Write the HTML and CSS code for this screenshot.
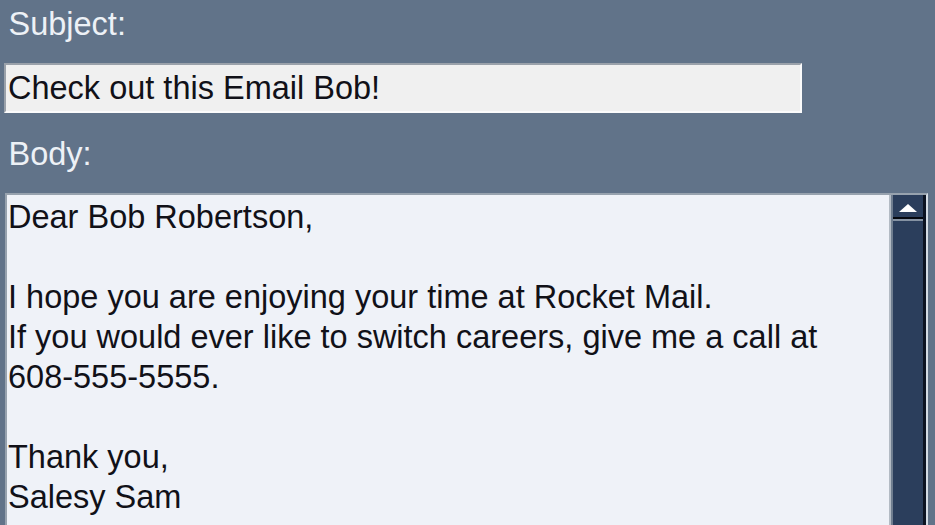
FILE: index.html
```html
<!DOCTYPE html>
<html lang="en">
<head>
<meta charset="utf-8">
<title>Compose</title>
<link rel="stylesheet" href="styles.css">
</head>
<body>
<form class="form">
  <div class="label">Subject:</div>
  <div class="subject">Check out this Email Bob!</div>
  <div class="label label-body">Body:</div>
  <div class="body-box">
    <div class="text">Dear Bob Robertson,

I hope you are enjoying your time at Rocket Mail.
If you would ever like to switch careers, give me a call at
608-555-5555.

Thank you,
Salesy Sam</div>
    <div class="scroll">
      <div class="up"><span class="arrow"></span></div>
      <div class="track"></div>
    </div>
  </div>
</form>
</body>
</html>
```
FILE: styles.css
```css
html, body {
  margin: 0;
  height: 100%;
  overflow: hidden;
  background: #617389;
}

.form {
  display: flex;
  flex-direction: column;
  align-items: flex-start;
  padding: 3.75px 0 0 4px;
  font-family: "Liberation Sans", Arial, sans-serif;
  font-size: 32.5px;
  line-height: 40px;
}

.label {
  color: #edf1f6;
  padding-left: 4.5px;
  height: 40px;
}

.label-body {
  margin-top: 21.25px;
}

.subject {
  margin-top: 18.75px;
  box-sizing: border-box;
  width: 798px;
  height: 50px;
  padding: 3.5px 0 0 2px;
  background: #f0f0f0;
  border: 2.5px solid;
  border-color: #9aa1aa #fbfbfb #fbfbfb #9aa1aa;
  color: #111118;
  white-space: nowrap;
}

.body-box {
  margin-top: 18.75px;
  margin-left: 1px;
  box-sizing: border-box;
  width: 922.5px;
  height: 420px;
  display: flex;
  background: #eff2f8;
  border: 2.5px solid;
  border-color: #97a2ae #d3dbe4 #d3dbe4 #97a2ae;
}

.text {
  flex: 1;
  padding: 2.7px 0 0 1px;
  white-space: pre-line;
  color: #111118;
}

.scroll {
  width: 37px;
  box-sizing: border-box;
  display: flex;
  flex-direction: column;
  border-left: 2px solid #b3bbc4;
  border-right: 3px solid #0c1322;
  padding-left: 2px;
  background: #6f7d8f;
}

.up {
  height: 22px;
  flex: none;
  background: #2b3e5c;
  border-bottom: 2.5px solid #05080f;
  display: flex;
  align-items: center;
  justify-content: center;
}

.arrow {
  width: 0;
  height: 0;
  margin-top: 4px;
  border-left: 9px solid transparent;
  border-right: 9px solid transparent;
  border-bottom: 8px solid #ffffff;
}

.track {
  flex: 1;
  background: #2b3e5c;
  border-top: 2px solid #8592a3;
}
```
